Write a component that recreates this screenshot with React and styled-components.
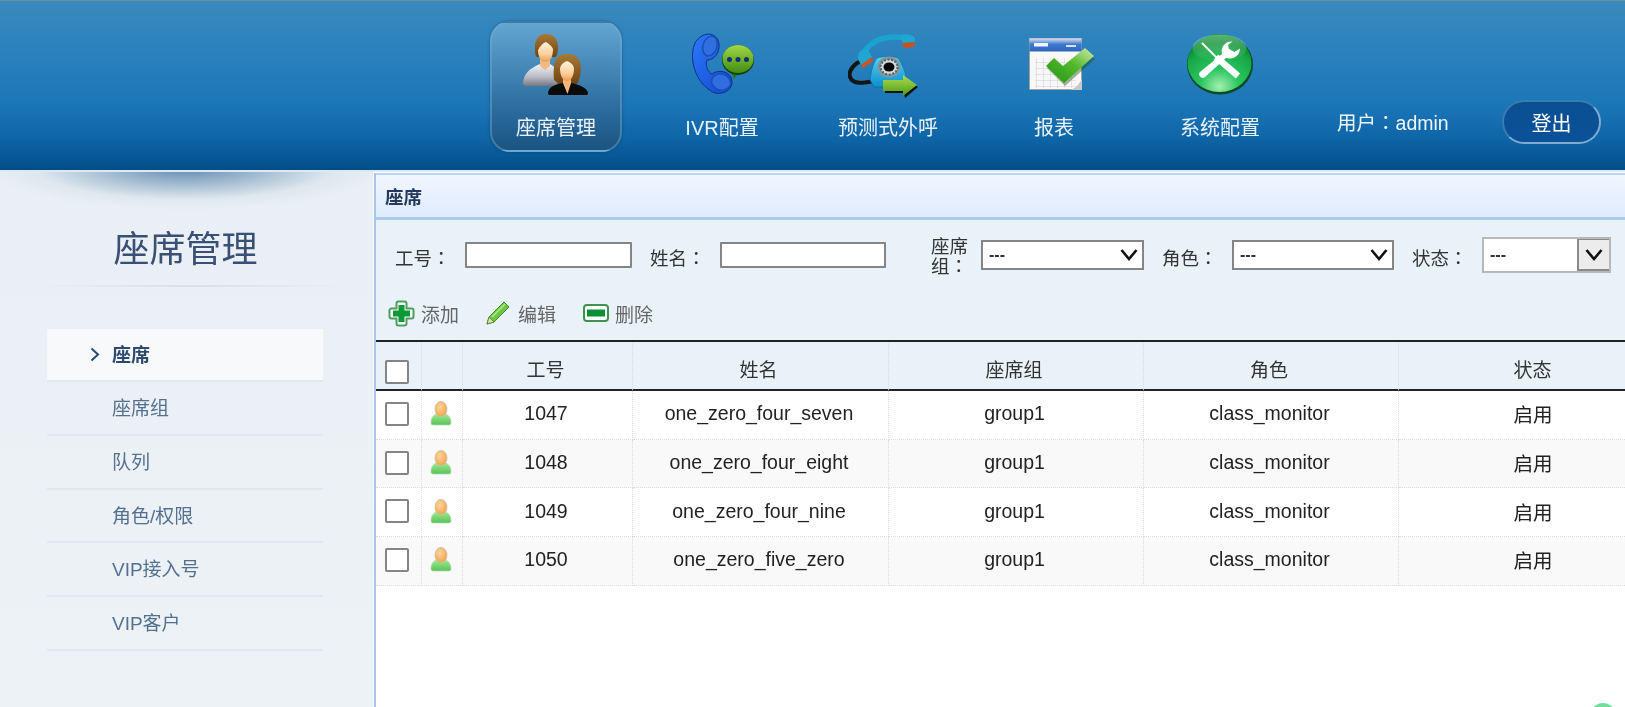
import React from "react";
import styled, { createGlobalStyle } from "styled-components";

const Global = createGlobalStyle`
  html, body { margin: 0; padding: 0; background: #fff; }
  body { font-family: "Liberation Sans", "Noto Sans CJK SC", sans-serif; }
  * { box-sizing: border-box; }
`;

const Page = styled.div`
  position: relative;
  width: 1625px;
  height: 707px;
  overflow: hidden;
  display: flex;
  flex-direction: column;
  background: #fff;
  filter: blur(0.45px);
`;

const Header = styled.header`
  flex: none;
  height: 170px;
  display: flex;
  align-items: flex-start;
  padding: 21px 0 0 473px;
  border-top: 1px solid #6d8fa6;
  background: linear-gradient(180deg, #3b89bc 0%, #2d83bd 25%, #1c77b8 60%, #0f66a8 80%, #0a5a9a 90%, #014d87 100%);
`;

const Nav = styled.nav`
  display: flex;
`;

const NavItem = styled.a`
  width: 166px;
  height: 131px;
  margin-top: -1px;
  display: flex;
  justify-content: center;
`;

const NavInner = styled.div`
  width: 132px;
  height: 131px;
  display: flex;
  flex-direction: column;
  align-items: center;
  border-radius: 20px;
  border: 2px solid ${p => (p.$active ? "rgba(120,175,210,.42)" : "transparent")};
  background: ${p => (p.$active ? "linear-gradient(180deg, #63a6d2 0%, #4588b8 35%, #2a6a9c 70%, #1a5482 100%)" : "none")};
  box-shadow: ${p => (p.$active ? "0 0 3px rgba(10,50,90,.5)" : "none")};
`;

const IconSlot = styled.div`
  height: 80px;
  display: flex;
  align-items: flex-start;
  justify-content: center;
  padding-top: 10px;
  margin-left: ${p => p.$shift || 0}px;
`;

const NavLabel = styled.span`
  margin-top: 12px;
  font-size: 20px;
  line-height: 26px;
  color: #e9f1f7;
  white-space: nowrap;
`;

const UserText = styled.div`
  margin: 87px 0 0 34px;
  font-size: 19.5px;
  line-height: 26px;
  color: #eef5fb;
  white-space: nowrap;
  width: 112px;
`;

const Colon = styled.span`
  font-family: "Noto Sans CJK TC", sans-serif;
`;

const Logout = styled.button`
  margin: 78px 0 0 53px;
  width: 99px;
  height: 44px;
  padding: 0;
  font: inherit;
  font-size: 20px;
  color: #fff;
  border-radius: 22px;
  border: 2px solid #3a7cb0;
  border-right-color: #7fadd0;
  border-bottom-color: #7fadd0;
  background: linear-gradient(180deg, #0a4f92, #0b5199);
`;

const Stripe = styled.div`
  flex: none;
  height: 2px;
  background: #dbe9f6;
`;

const Body = styled.div`
  flex: 1;
  min-height: 0;
  display: flex;
`;

const Sidebar = styled.aside`
  flex: none;
  width: 374px;
  padding: 0 50px 0 47px;
  border-right: 1px solid #f8fbfd;
  background:
    radial-gradient(ellipse 200px 42px at 185px -4px, rgba(45,100,150,.72) 0%, rgba(85,130,168,.44) 42%, rgba(170,195,215,.16) 75%, rgba(238,243,247,0) 100%),
    linear-gradient(180deg, #e9eff4 0%, #edf2f6 100%);
`;

const SideTitle = styled.h1`
  margin: 55px -47px 0 0;
  width: 277px;
  text-align: center;
  font-size: 36px;
  line-height: 46px;
  font-weight: 400;
  color: #3a4f75;
  white-space: nowrap;
`;

const SideRule = styled.div`
  height: 2px;
  margin: 12px -20px 0 -5px;
  background: linear-gradient(90deg, rgba(215,225,233,0), #d5e0e9 50%, rgba(215,225,233,0));
`;

const Menu = styled.ul`
  list-style: none;
  margin: 42px 0 0;
  padding: 0;
`;

const MenuItem = styled.li`
  position: relative;
  height: ${p => (p.$active ? 53 : 53.8)}px;
  padding-left: 65px;
  font-size: 19px;
  line-height: 53px;
  font-weight: ${p => (p.$active ? 600 : 400)};
  color: ${p => (p.$active ? "#2f4a70" : "#55708f")};
  background: ${p => (p.$active ? "#f8f9fa" : "transparent")};
  border-bottom: 2px solid #e0e9f0;
`;

const Chevron = styled.svg`
  position: absolute;
  left: 43px;
  top: 18px;
`;

const Panel = styled.main`
  flex: 1;
  min-width: 0;
  margin-top: 1px;
  border-left: 2px solid #a9c7ec;
  overflow: hidden;
`;

const TitleBar = styled.div`
  height: 47px;
  padding-left: 9px;
  font-size: 18.5px;
  font-weight: 600;
  line-height: 46px;
  color: #24395f;
  border-top: 2px solid #bcd2ef;
  border-bottom: 3px solid #afc9ea;
  background: linear-gradient(180deg, #f0f6ff 0%, #dfebfc 100%);
`;

const Filter = styled.div`
  height: 122px;
  padding: 17px 0 0 19px;
  background: #e9f2f9;
  border-bottom: 2px solid #222;
`;

const FilterRow = styled.div`
  display: flex;
  align-items: center;
  gap: 18px;
  height: 36px;
`;

const Field = styled.label`
  display: flex;
  align-items: center;
  margin-left: ${p => p.$offset || 0}px;
`;

const FieldLabel = styled.span`
  width: ${p => p.$w || 70}px;
  font-size: 18.5px;
  line-height: 20px;
  color: #333;
  padding: 5px ${p => p.$pad || 0}px 0 0;
`;

const WrappedLabel = styled(FieldLabel)`
  font-family: "Noto Sans CJK TC", sans-serif;
  padding-top: 0;
`;

const TextInput = styled.input`
  width: ${p => p.$w}px;
  height: 26px;
  padding: 0 4px;
  border: 2px solid #858585;
  border-radius: 1px;
  background: #fff;
  outline: none;
`;

const SelectBox = styled.div`
  width: ${p => p.$w}px;
  height: ${p => (p.$plain ? 36 : 30)}px;
  display: flex;
  align-items: center;
  justify-content: space-between;
  padding-left: 6px;
  background: #fff;
  border: 2px solid ${p => (p.$plain ? "#b8b8b8" : "#858585")};
  font-size: 16px;
  font-weight: 600;
  color: #333;
`;

const ArrowCell = styled.div`
  align-self: stretch;
  width: ${p => (p.$plain ? 32 : 26)}px;
  display: flex;
  align-items: center;
  justify-content: center;
  background: ${p => (p.$plain ? "#ececec" : "transparent")};
  border: ${p => (p.$plain ? "2px solid #8a8a8a" : "none")};
  border-top-width: 1px;
  border-right-width: 0;
`;

const Actions = styled.div`
  display: flex;
  align-items: center;
  height: 26px;
  margin: 27px 0 0 -7px;
`;

const Action = styled.a`
  display: flex;
  align-items: center;
  gap: ${p => p.$gap}px;
  margin-right: ${p => p.$mr}px;
  font-size: 19px;
  color: #666;
`;

const Table = styled.table`
  width: 1295px;
  table-layout: fixed;
  border-collapse: separate;
  border-spacing: 0;
  font-size: 19.5px;
  color: #222;
`;

const Th = styled.th`
  height: 49px;
  padding: 5px 4px 0 0;
  font-size: 19px;
  font-weight: 400;
  background: #e9f2f9;
  color: #333;
  text-align: center;
  border-right: 1px dotted #d6dde3;
  border-bottom: 2px solid #222;
`;

const Row = styled.tr`
  background: ${p => (p.$alt ? "#f9f9f9" : "#fff")};
`;

const Td = styled.td`
  height: 48.7px;
  padding: 0 3px 2px 0;
  text-align: center;
  white-space: nowrap;
  border-right: 1px dotted #dcdcdc;
  border-bottom: 1px dotted #dcdcdc;
`;

const Box = styled.span`
  display: block;
  width: 24px;
  height: 24px;
  margin: ${p => (p.$head ? "7px" : "0")} 0 0 9px;
  background: #fff;
  border: 2px solid #858585;
  border-radius: 2px;
`;

const AgentSlot = styled.span`
  display: flex;
  justify-content: center;
`;

const Corner = styled.div`
  position: absolute;
  left: 1590px;
  top: 703px;
  width: 26px;
  height: 26px;
  border-radius: 50%;
  background: #6fdf9b;
`;

const IconPeople = () => (
  <svg width="66" height="64" viewBox="0 0 66 64">
    <defs>
      <linearGradient id="pb" x1="0" y1="0" x2="0" y2="1"><stop offset="0" stopColor="#f4f4f8" /><stop offset=".6" stopColor="#b9b9c6" /><stop offset="1" stopColor="#777783" /></linearGradient>
      <linearGradient id="pf" x1="0" y1="0" x2="0" y2="1"><stop offset="0" stopColor="#fff2e0" /><stop offset=".6" stopColor="#fcd09c" /><stop offset="1" stopColor="#e89a52" /></linearGradient>
      <linearGradient id="ph1" x1="0" y1="0" x2="0" y2="1"><stop offset="0" stopColor="#a87a34" /><stop offset="1" stopColor="#6e4412" /></linearGradient>
    </defs>
    <path d="M0 50C1 40 6 36 17 31L27 31C31 33 33 36 34 38L34 53L4 53C1 53 0 52 0 50Z" fill="url(#pb)" />
    <path d="M17 23L17 33L22 37L27 33L27 23Z" fill="#f2bb82" />
    <path d="M12 17C11 5 17 1 23 1C31 1 36 7 35 17C34 24 32 25 31 24L14 24C13 24 12 21 12 17Z" fill="url(#ph1)" />
    <path d="M15 17C17 13 20 10 23 9C26 11 29 13 30 16C30 24 27 29 22.5 29C18 29 15 24 15 17Z" fill="url(#pf)" />
    <path d="M31 47C30 37 31 29 34 25C37 21 42 21 46 21C53 21 58 27 58 35C58 41 56 48 54 51L36 51Z" fill="url(#ph1)" />
    <path d="M25 60C26 54 30 52 40 50L44 58L48 50C58 52 64 55 65 60C65 62 64 62 62 62L28 62C26 62 25 62 25 60Z" fill="#0b0b0b" />
    <path d="M40 42L48 42L48 50L44.5 61L40 50Z" fill="#f5b87a" />
    <path d="M37 35C38 31 41 29 44 28C47 29 50 31 51 35C51 43 48 48 44 48C40 48 37 43 37 35Z" fill="url(#pf)" />
  </svg>
);

const IconPhoneChat = () => (
  <svg width="62" height="62" viewBox="0 0 62 62">
    <defs>
      <linearGradient id="ph" x1="0" y1="0" x2="1" y2="1"><stop offset="0" stopColor="#2c7af6" /><stop offset="1" stopColor="#1247d2" /></linearGradient>
      <linearGradient id="bb" x1="0" y1="0" x2="0" y2="1"><stop offset="0" stopColor="#a4d843" /><stop offset="1" stopColor="#3f8d14" /></linearGradient>
    </defs>
    <path d="M10 3C16 -1 26 1 27 11C28 20 22 27 15 27C13 33 16 39 20 41C26 36 39 38 40 48C41 57 31 62 23 60C8 54 -2 34 1 17C2 10 5 6 10 3Z" fill="url(#ph)" stroke="#0e318c" strokeWidth="1" />
    <ellipse cx="18" cy="13" rx="7" ry="10" transform="rotate(18 18 13)" fill="#2f6fe0" stroke="#1c4fb8" strokeWidth="1.5" />
    <ellipse cx="29" cy="49" rx="9.5" ry="8" transform="rotate(15 29 49)" fill="#2f6fe0" stroke="#1c4fb8" strokeWidth="1.5" />
    <path d="M38 37L48 38L42 46Z" fill="#2f6f10" />
    <ellipse cx="46" cy="27" rx="16" ry="15" fill="#1a3d08" />
    <ellipse cx="46" cy="26" rx="15.5" ry="14" fill="url(#bb)" />
    <circle cx="37.5" cy="26.5" r="2.5" fill="#12307a" />
    <circle cx="46" cy="26.5" r="2.5" fill="#12307a" />
    <circle cx="54.5" cy="26.5" r="2.5" fill="#12307a" />
  </svg>
);

const IconDial = () => (
  <svg width="70" height="66" viewBox="0 0 70 66">
    <defs>
      <linearGradient id="db" x1="0" y1="0" x2="0" y2="1"><stop offset="0" stopColor="#55d0f0" /><stop offset="1" stopColor="#0c8fd0" /></linearGradient>
      <linearGradient id="da" x1="0" y1="0" x2="0" y2="1"><stop offset="0" stopColor="#aede50" /><stop offset="1" stopColor="#4c9a16" /></linearGradient>
    </defs>
    <g transform="translate(0 1)">
      <path d="M15 27C6 28 0 38 2 43C5 51 16 49 27 47" fill="none" stroke="#141414" strokeWidth="4" />
      <path d="M15 20C22 8 34 3 46 3C53 3 58 3 62 5" fill="none" stroke="#18a4cf" strokeWidth="5.5" />
      <path d="M10 25C9 18 15 14 20 15L24 23L13 31Z" fill="#1ea7d2" />
      <path d="M13 31L24 23L25 27L15 34Z" fill="#d2541a" />
      <path d="M52 1C58 0 66 0 67 5L67 9L55 10Z" fill="#1ea7d2" />
      <path d="M54 9L67 8L66 13L56 14Z" fill="#c9501a" />
      <path d="M29 24C34 22 46 22 50 24C54 29 58 40 59 46L56 53L26 53L22 46C23 38 25 29 29 24Z" fill="url(#db)" stroke="#0c6f9e" strokeWidth=".7" />
      <ellipse cx="41" cy="33" rx="11.5" ry="10.5" fill="#7f98a2" />
      <ellipse cx="41" cy="33" rx="8.5" ry="7.5" fill="#d3dcdf" stroke="#59656b" strokeDasharray="2 1.6" strokeWidth="2.2" />
      <ellipse cx="41" cy="33" rx="5.5" ry="4.5" fill="#080808" />
      <path d="M37 49L57 49L57 43L70 53L57 64L56 59L37 59Z" fill="#101010" />
      <path d="M35 46L55 46L55 41L69 51L55 62L55 57L35 57Z" fill="url(#da)" />
    </g>
  </svg>
);

const IconReport = () => (
  <svg width="66" height="62" viewBox="0 0 66 62">
    <defs>
      <linearGradient id="rh" x1="0" y1="0" x2="0" y2="1"><stop offset="0" stopColor="#d4e3f5" /><stop offset=".45" stopColor="#3e78cf" /><stop offset="1" stopColor="#2f67bd" /></linearGradient>
      <linearGradient id="rc" x1="0" y1="1" x2="1" y2="0"><stop offset="0" stopColor="#1f9410" /><stop offset=".55" stopColor="#52b82c" /><stop offset="1" stopColor="#d6ecb0" /></linearGradient>
      <pattern id="rg" width="7" height="6" patternUnits="userSpaceOnUse"><rect width="7" height="6" fill="#f7f7f7" /><path d="M0 0H7M0 0V6" stroke="#d0d0d0" strokeWidth="1" /></pattern>
    </defs>
    <g transform="translate(0 5)">
      <rect x="0" y="0" width="53" height="52" fill="#a0a0a0" />
      <rect x="1" y="13" width="51" height="38" fill="#f8f8f8" />
      <rect x="6" y="20" width="41" height="30" fill="url(#rg)" />
      <rect x="0.5" y="0.5" width="52" height="13" fill="url(#rh)" />
      <rect x="5" y="5" width="14" height="3.5" fill="#eef4fb" />
      <rect x="37" y="7" width="10" height="2" fill="#d6e4f5" />
      <path d="M41 52C47 50 50 46 53 41L53 52Z" fill="#c8c8c8" />
      <path d="M18 30L26 23L35 31L57 14L66 21L36 48Z" fill="#1c4a0a" opacity=".4" />
      <path d="M17 28L25 20L34 28L56 10L65 18L35 45Z" fill="url(#rc)" />
    </g>
  </svg>
);

const IconTools = () => (
  <svg width="66" height="62" viewBox="0 0 66 62">
    <defs>
      <radialGradient id="tg" cx=".5" cy=".9" r=".75"><stop offset="0" stopColor="#a4f0ae" /><stop offset=".4" stopColor="#2bc560" /><stop offset=".85" stopColor="#17a846" /><stop offset="1" stopColor="#0b8f30" /></radialGradient>
      <linearGradient id="ts" x1="0" y1="0" x2="0" y2="1"><stop offset="0" stopColor="#fff" stopOpacity=".32" /><stop offset="1" stopColor="#fff" stopOpacity="0" /></linearGradient>
    </defs>
    <ellipse cx="33" cy="31.5" rx="33" ry="30" fill="#0a4a24" />
    <ellipse cx="32.5" cy="30" rx="32" ry="29" fill="url(#tg)" />
    <ellipse cx="32.5" cy="15" rx="27" ry="13.5" fill="url(#ts)" />
    <path d="M15 10L31 26" stroke="#fff" strokeWidth="1.8" />
    <path d="M29 24L51 43" stroke="#fff" strokeWidth="6.5" />
    <path d="M45.5 8.5C38 8 33.5 14 35 21L13 39C10 42 15 47 18 44L39 25C47 27 53 22 53 15.5L47.5 19L42 16L41 12Z" fill="#fff" />
  </svg>
);

const IconAdd = () => (
  <svg width="27" height="27" viewBox="0 0 27 27">
    <path d="M10.5 1.5H16.5A2 2 0 0 1 18.5 3.5V8.5H23.5A2 2 0 0 1 25.5 10.5V16.5A2 2 0 0 1 23.5 18.5H18.5V23.5A2 2 0 0 1 16.5 25.5H10.5A2 2 0 0 1 8.5 23.5V18.5H3.5A2 2 0 0 1 1.5 16.5V10.5A2 2 0 0 1 3.5 8.5H8.5V3.5A2 2 0 0 1 10.5 1.5Z" fill="#fff" stroke="#4f9c5e" strokeWidth="2" />
    <path d="M10.5 5H16.5V10.5H22V16.5H16.5V22H10.5V16.5H5V10.5H10.5Z" fill="#0a9a35" />
  </svg>
);

const IconPencil = () => (
  <svg width="24" height="24" viewBox="0 0 24 24">
    <path d="M1 23L3 16L18 1L23 6L8 21Z" fill="#6cc644" stroke="#3f8a2a" strokeWidth="1" />
    <path d="M1 23L3 16L8 21Z" fill="#e8d9a8" stroke="#3f8a2a" strokeWidth=".8" />
    <path d="M6 16L19 3" stroke="#b4e88c" strokeWidth="1.5" />
  </svg>
);

const IconRemove = () => (
  <svg width="26" height="18" viewBox="0 0 26 18">
    <rect x="1" y="1" width="24" height="16" rx="3" fill="#fff" stroke="#3f9150" strokeWidth="2" />
    <rect x="4" y="5.5" width="18" height="7" fill="#0a8f35" />
  </svg>
);

const IconAgent = () => (
  <svg width="22" height="25" viewBox="0 0 22 25">
    <defs>
      <radialGradient id="ah" cx=".4" cy=".35" r=".7"><stop offset="0" stopColor="#ffd49a" /><stop offset="1" stopColor="#f0a24a" /></radialGradient>
      <linearGradient id="ab" x1="0" y1="0" x2="0" y2="1"><stop offset="0" stopColor="#a9ec92" /><stop offset="1" stopColor="#54c457" /></linearGradient>
    </defs>
    <path d="M1 22C1 17 3 14 8 12H14C19 14 21 17 21 22C21 24 19 24 18 24H4C3 24 1 24 1 22Z" fill="url(#ab)" stroke="#b4d4b4" strokeWidth=".7" />
    <ellipse cx="11" cy="8" rx="6" ry="7.5" fill="url(#ah)" stroke="#cbbba2" strokeWidth=".8" />
  </svg>
);

const Arrow = () => (
  <svg width="20" height="14" viewBox="0 0 20 14">
    <path d="M2.5 2L10 11L17.5 2" fill="none" stroke="#111" strokeWidth="2.6" />
  </svg>
);

const navItems = [
  { label: "座席管理", icon: <IconPeople />, active: true },
  { label: "IVR配置", icon: <IconPhoneChat />, shift: 2 },
  { label: "预测式外呼", icon: <IconDial />, shift: -10 },
  { label: "报表", icon: <IconReport />, shift: 16 },
  { label: "系统配置", icon: <IconTools /> },
];

const menu = ["座席", "座席组", "队列", "角色/权限", "VIP接入号", "VIP客户"];

const agents = [
  ["1047", "one_zero_four_seven"],
  ["1048", "one_zero_four_eight"],
  ["1049", "one_zero_four_nine"],
  ["1050", "one_zero_five_zero"],
];

const cols = [46, 41, 170, 256, 255, 255, 272];

export default function App() {
  return (
    <Page>
      <Global />
      <Header>
        <Nav>
          {navItems.map(n => (
            <NavItem key={n.label}>
              <NavInner $active={n.active}>
                <IconSlot $shift={n.shift}>{n.icon}</IconSlot>
                <NavLabel>{n.label}</NavLabel>
              </NavInner>
            </NavItem>
          ))}
        </Nav>
        <UserText>用户<Colon>：</Colon>admin</UserText>
        <Logout>登出</Logout>
      </Header>
      <Stripe />
      <Body>
        <Sidebar>
          <SideTitle>座席管理</SideTitle>
          <SideRule />
          <Menu>
            {menu.map((m, i) => (
              <MenuItem key={m} $active={i === 0}>
                {i === 0 && (
                  <Chevron width="10" height="15" viewBox="0 0 10 15">
                    <path d="M1.5 1.5L8 7.5L1.5 13.5" fill="none" stroke="#2b4a72" strokeWidth="2" />
                  </Chevron>
                )}
                {m}
              </MenuItem>
            ))}
          </Menu>
        </Sidebar>
        <Panel>
          <TitleBar>座席</TitleBar>
          <Filter>
            <FilterRow>
              <Field>
                <FieldLabel>工号<Colon>：</Colon></FieldLabel>
                <TextInput $w={167} />
              </Field>
              <Field>
                <FieldLabel>姓名<Colon>：</Colon></FieldLabel>
                <TextInput $w={166} />
              </Field>
              <Field $offset={27}>
                <WrappedLabel $w={50} $pad={10}>座席组：</WrappedLabel>
                <SelectBox $w={163}>---<ArrowCell><Arrow /></ArrowCell></SelectBox>
              </Field>
              <Field>
                <FieldLabel>角色<Colon>：</Colon></FieldLabel>
                <SelectBox $w={162}>---<ArrowCell><Arrow /></ArrowCell></SelectBox>
              </Field>
              <Field>
                <FieldLabel>状态<Colon>：</Colon></FieldLabel>
                <SelectBox $w={129} $plain>---<ArrowCell $plain><Arrow /></ArrowCell></SelectBox>
              </Field>
            </FilterRow>
            <Actions>
              <Action $gap={6} $mr={27}><IconAdd />添加</Action>
              <Action $gap={8} $mr={27}><IconPencil />编辑</Action>
              <Action $gap={6} $mr={0}><IconRemove />删除</Action>
            </Actions>
          </Filter>
          <Table>
            <colgroup>
              {cols.map((c, i) => <col key={i} style={{ width: c }} />)}
            </colgroup>
            <thead>
              <tr>
                <Th><Box $head /></Th>
                <Th />
                <Th>工号</Th>
                <Th>姓名</Th>
                <Th>座席组</Th>
                <Th>角色</Th>
                <Th>状态</Th>
              </tr>
            </thead>
            <tbody>
              {agents.map((a, i) => (
                <Row key={a[0]} $alt={i % 2 === 1}>
                  <Td><Box /></Td>
                  <Td><AgentSlot><IconAgent /></AgentSlot></Td>
                  <Td>{a[0]}</Td>
                  <Td>{a[1]}</Td>
                  <Td>group1</Td>
                  <Td>class_monitor</Td>
                  <Td>启用</Td>
                </Row>
              ))}
            </tbody>
          </Table>
        </Panel>
      </Body>
      <Corner />
    </Page>
  );
}
